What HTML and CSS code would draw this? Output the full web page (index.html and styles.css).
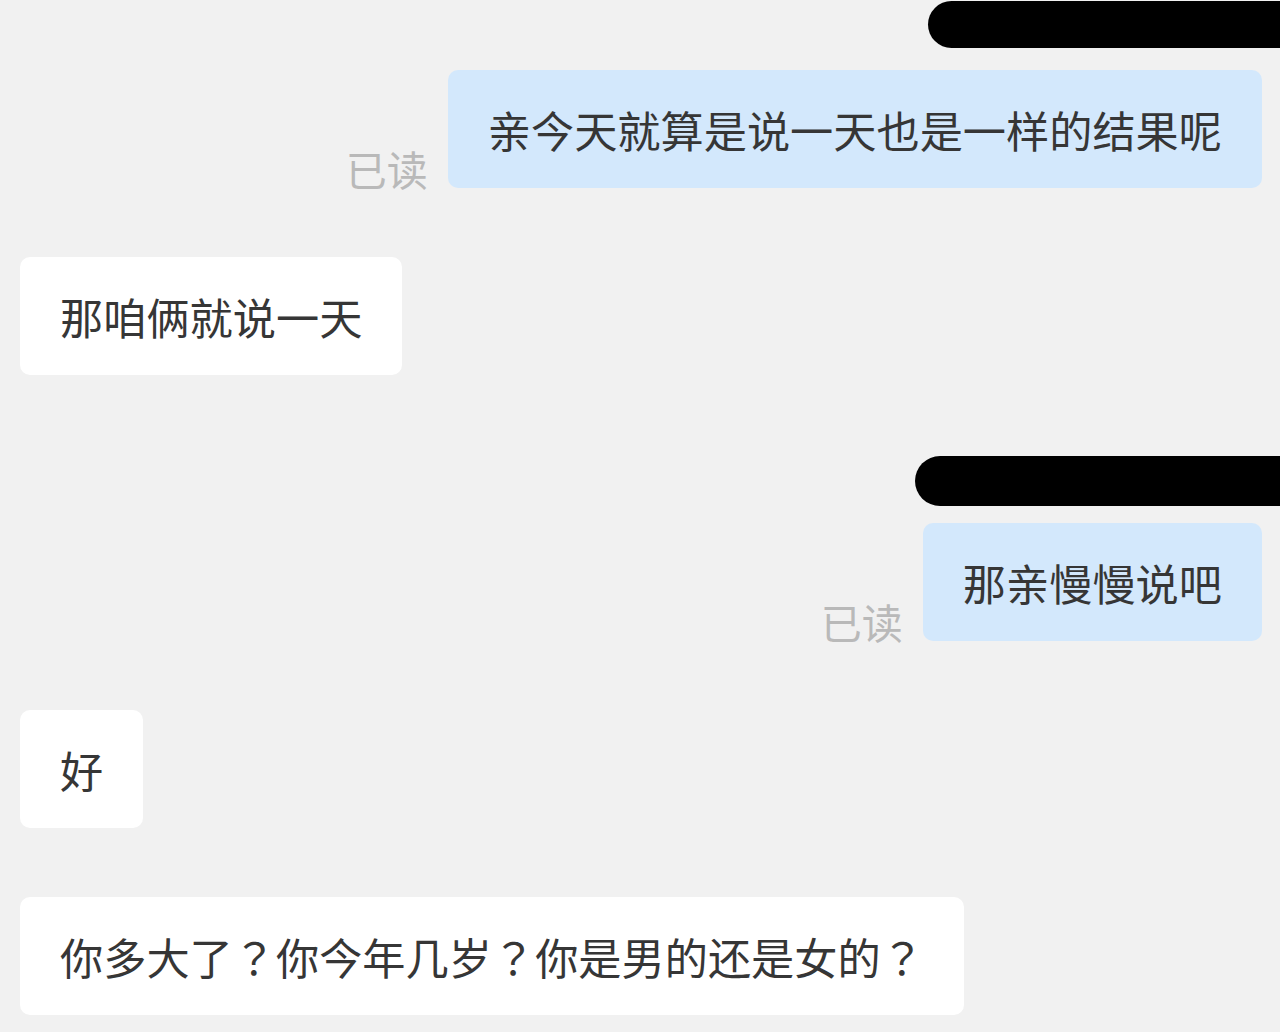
FILE: index.html
```html
<!DOCTYPE html>
<html lang="zh-CN">
<head>
<meta charset="utf-8">
<title>聊天</title>
<link rel="stylesheet" href="styles.css">
</head>
<body>
<div class="chat">
  <div class="msg sent first">
    <div class="name-redact"></div>
    <div class="row">
      <span class="read">已读</span>
      <div class="bubble blue">亲今天就算是说一天也是一样的结果呢</div>
    </div>
  </div>

  <div class="msg recv">
    <div class="bubble white">那咱俩就说一天</div>
  </div>

  <div class="msg sent second">
    <div class="name-redact"></div>
    <div class="row">
      <span class="read">已读</span>
      <div class="bubble blue">那亲慢慢说吧</div>
    </div>
  </div>

  <div class="msg recv">
    <div class="bubble white">好</div>
  </div>

  <div class="msg recv">
    <div class="bubble white">你多大了<span class="punct" lang="ja">？</span>你今年几岁<span class="punct" lang="ja">？</span>你是男的还是女的<span class="punct" lang="ja">？</span></div>
  </div>
</div>
</body>
</html>
```
FILE: styles.css
```css
html, body {
  margin: 0;
  padding: 0;
  background: #f1f1f1;
}

body {
  font-family: "Noto Sans CJK SC", "Noto Sans", sans-serif;
  color: #363636;
  height: 1032px;
  overflow: hidden;
}

.chat {
  display: flex;
  flex-direction: column;
  padding: 0 18px 0 20px;
}

.msg {
  display: flex;
  flex-direction: column;
}

.msg.sent {
  align-items: flex-end;
}

.msg.recv {
  align-items: flex-start;
  margin-top: 69px;
}

.msg.second {
  margin-top: 81px;
}

.msg.first .name-redact {
  width: 352px;
  height: 47px;
  margin-top: 1px;
  margin-bottom: 22px;
}

.msg.second .name-redact {
  width: 365px;
  height: 50px;
  margin-bottom: 17px;
}

.name-redact {
  background: #000000;
  border-radius: 26px 0 0 26px;
  margin-right: -18px;
}

.row {
  display: flex;
  align-items: flex-end;
  gap: 20px;
}

.read {
  font-size: 41px;
  line-height: 40px;
  color: #b9b9b9;
}

.bubble {
  font-size: 43.2px;
  line-height: 58px;
  padding: 30px 40px;
  border-radius: 10px;
  white-space: nowrap;
}

.punct {
  font-family: "Noto Sans CJK JP", "Noto Sans CJK SC", sans-serif;
}

.bubble.blue {
  background: #d3e8fc;
}

.bubble.white {
  background: #ffffff;
}
```
